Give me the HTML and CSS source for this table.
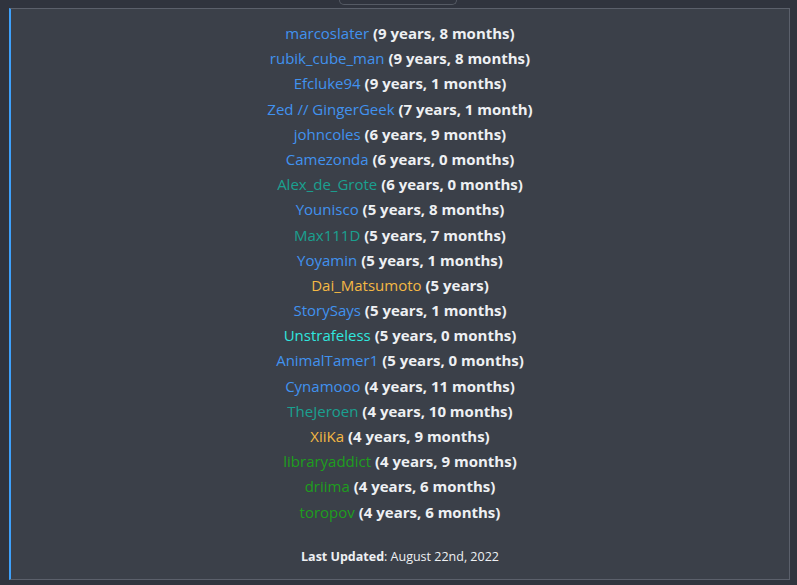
FILE: index.html
```html
<!DOCTYPE html>
<html>
<head>
<meta charset="utf-8">
<link rel="stylesheet" href="styles.css">
</head>
<body>
<div class="tab"></div>
<div class="panel">
  <ul class="list">
    <li><span class="n blue">marcoslater</span> <b>(9 years, 8 months)</b></li>
    <li><span class="n blue">rubik_cube_man</span> <b>(9 years, 8 months)</b></li>
    <li><span class="n blue">Efcluke94</span> <b>(9 years, 1 months)</b></li>
    <li><span class="n blue">Zed // GingerGeek</span> <b>(7 years, 1 month)</b></li>
    <li><span class="n blue">johncoles</span> <b>(6 years, 9 months)</b></li>
    <li><span class="n blue">Camezonda</span> <b>(6 years, 0 months)</b></li>
    <li><span class="n teal">Alex_de_Grote</span> <b>(6 years, 0 months)</b></li>
    <li><span class="n blue">Younisco</span> <b>(5 years, 8 months)</b></li>
    <li><span class="n teal">Max111D</span> <b>(5 years, 7 months)</b></li>
    <li><span class="n blue">Yoyamin</span> <b>(5 years, 1 months)</b></li>
    <li><span class="n orange">Dai_Matsumoto</span> <b>(5 years)</b></li>
    <li><span class="n blue">StorySays</span> <b>(5 years, 1 months)</b></li>
    <li><span class="n cyan">Unstrafeless</span> <b>(5 years, 0 months)</b></li>
    <li><span class="n blue">AnimalTamer1</span> <b>(5 years, 0 months)</b></li>
    <li><span class="n blue">Cynamooo</span> <b>(4 years, 11 months)</b></li>
    <li><span class="n teal">TheJeroen</span> <b>(4 years, 10 months)</b></li>
    <li><span class="n orange">XiiKa</span> <b>(4 years, 9 months)</b></li>
    <li><span class="n green">libraryaddict</span> <b>(4 years, 9 months)</b></li>
    <li><span class="n green">driima</span> <b>(4 years, 6 months)</b></li>
    <li><span class="n green">toropov</span> <b>(4 years, 6 months)</b></li>
  </ul>
  <p class="updated"><b>Last Updated</b>: August 22nd, 2022</p>
</div>
</body>
</html>
```
FILE: styles.css
```css
html, body {
  margin: 0;
  padding: 0;
  background: #30343e;
  font-family: "Open Sans", "Liberation Sans", sans-serif;
}
body {
  width: 797px;
  height: 585px;
  overflow: hidden;
}
.tab {
  width: 116px;
  height: 4px;
  margin: 0 auto 0 auto;
  position: relative;
  left: -1px;
  border: 1px solid #555a64;
  border-top: none;
  border-radius: 0 0 10px 10px;
}
.panel {
  margin: 3px 0 0 9px;
  width: 778px;
  height: 570px;
  background: #3b4049;
  border: 1px solid #5b606b;
  border-left: 2px solid #3ea0fa;
  text-align: center;
}
.list {
  list-style: none;
  margin: 0;
  padding: 12px 0 0 0;
}
.list li {
  font-size: 15px;
  line-height: 25.2px;
  height: 25.2px;
  color: #eef0f3;
}
.list b {
  font-weight: 700;
  color: #eef0f3;
}
.n { font-weight: 400; }
.blue { color: #4192ef; }
.teal { color: #1aa090; }
.orange { color: #f4b844; }
.cyan { color: #30e6df; }
.green { color: #1e9e1e; }
.updated {
  margin: 23px 0 0 0;
  font-size: 12.5px;
  line-height: 18px;
  color: #eef0f3;
}
.updated b { font-weight: 700; }
```
